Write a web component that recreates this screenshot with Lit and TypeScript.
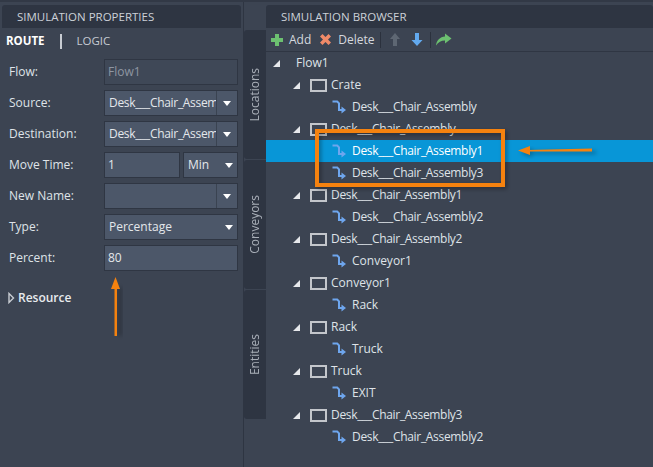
import { LitElement, html, css, svg } from "lit";
import { customElement } from "lit/decorators.js";

type Field = { label: string; kind: "text" | "combo" | "select" | "time"; value: string; muted?: boolean };

const FIELDS: Field[] = [
  { label: "Flow:", kind: "text", value: "Flow1", muted: true },
  { label: "Source:", kind: "combo", value: "Desk___Chair_Assembly1" },
  { label: "Destination:", kind: "combo", value: "Desk___Chair_Assembly3" },
  { label: "Move Time:", kind: "time", value: "1" },
  { label: "New Name:", kind: "combo", value: "" },
  { label: "Type:", kind: "select", value: "Percentage" },
  { label: "Percent:", kind: "text", value: "80" },
];

type Node = { label: string; children: string[]; selected?: string };

const TREE: Node[] = [
  { label: "Crate", children: ["Desk___Chair_Assembly"] },
  {
    label: "Desk___Chair_Assembly",
    children: ["Desk___Chair_Assembly1", "Desk___Chair_Assembly3"],
    selected: "Desk___Chair_Assembly1",
  },
  { label: "Desk___Chair_Assembly1", children: ["Desk___Chair_Assembly2"] },
  { label: "Desk___Chair_Assembly2", children: ["Conveyor1"] },
  { label: "Conveyor1", children: ["Rack"] },
  { label: "Rack", children: ["Truck"] },
  { label: "Truck", children: ["EXIT"] },
  { label: "Desk___Chair_Assembly3", children: ["Desk___Chair_Assembly2"] },
];

const routeIcon = svg`<svg class="route" width="14" height="14" viewBox="0 0 14 14">
  <path d="M0.5 1.5H5.2L7 3.3V10H11" fill="none" stroke="#6ea6ee" stroke-width="2"/>
  <path d="M9.5 6.5L14 10L9.5 13.5Z" fill="#6ea6ee"/>
</svg>`;

// the long asset names run tighter than the short labels in the reference
const nameClass = (s: string) => (s.includes("___") ? "long" : "");

@customElement("app-root")
class AppRoot extends LitElement {
  static override styles = css`
    :host {
      display: block;
      position: relative;
      width: 653px;
      height: 467px;
      overflow: hidden;
      background: #3c4452;
      color: #dfe3e8;
      font-family: "Open Sans", "Noto Sans", sans-serif;
      font-size: 12px;
      line-height: 16px;
    }

    .long {
      letter-spacing: -0.32px;
    }

    .layout {
      display: flex;
      height: 467px;
      box-sizing: border-box;
      border-top: 2px solid #323946;
    }

    .header {
      height: 23px;
      margin-top: 3px;
      background: #2e3542;
      border-radius: 3px 3px 0 0;
      color: #ccd1d8;
      font-size: 11.5px;
      line-height: 23px;
      padding-left: 15px;
      flex: none;
    }

    /* left panel */
    .left {
      width: 243px;
      flex: none;
      box-sizing: border-box;
      padding-left: 2px;
    }

    .left .header {
      width: 224px;
    }

    .route-tabs {
      display: flex;
      align-items: center;
      height: 26px;
      padding-left: 4px;
      font-size: 11.5px;
    }

    .route-tabs b {
      color: #fff;
      font-weight: 700;
    }

    .route-tabs i {
      width: 2px;
      height: 15px;
      margin: 0 15px 0 15px;
      background: #c8ccd2;
    }

    .route-tabs span {
      color: #c6cbd2;
    }

    .form {
      display: flex;
      flex-direction: column;
      gap: 5px;
      margin-top: 5px;
    }

    .row {
      display: flex;
      align-items: center;
      height: 26px;
      padding-left: 7px;
    }

    .row label {
      width: 95px;
      flex: none;
    }

    .control {
      display: flex;
      gap: 3px;
      width: 134px;
      height: 26px;
    }

    .box {
      display: flex;
      align-items: center;
      flex: 1;
      min-width: 0;
      box-sizing: border-box;
      background: #4c5769;
      border: 1px solid #2f3643;
      padding: 0 3px;
      color: #e4e7eb;
      white-space: nowrap;
      overflow: hidden;
    }

    .box.muted {
      background: #3f4857;
      color: #8e96a2;
    }

    .box.combo {
      padding: 0;
    }

    .box.combo .text {
      flex: 1;
      min-width: 0;
      align-self: stretch;
      line-height: 24px;
      padding-left: 4px;
      border-right: 1px solid #3a4351;
      overflow: hidden;
    }

    .box.select {
      justify-content: space-between;
      padding: 0 4px;
    }

    .caret {
      width: 0;
      height: 0;
      border-left: 4px solid transparent;
      border-right: 4px solid transparent;
      border-top: 5px solid #fff;
      flex: none;
    }

    .box.combo .caret {
      margin: 0 6px;
    }

    .resource {
      display: flex;
      align-items: center;
      gap: 3px;
      margin: 19px 0 0 6px;
      color: #e8ebee;
      font-size: 12px;
      font-weight: 600;
    }

    /* vertical tabs */
    .tabs {
      width: 23px;
      flex: none;
      display: flex;
      flex-direction: column;
      gap: 1px;
      padding-top: 28px;
      box-sizing: border-box;
      border-left: 1px solid #2e3542;
    }

    .tab {
      height: 129px;
      background: #2e3542;
      border-radius: 3px 0 0 3px;
      color: #a9afb8;
      display: flex;
      align-items: center;
      justify-content: center;
    }

    .tab span {
      writing-mode: vertical-rl;
      transform: rotate(180deg);
      font-size: 12px;
    }

    /* browser */
    .browser {
      flex: 1;
      min-width: 0;
    }

    .toolbar {
      display: flex;
      align-items: center;
      height: 23px;
      border-bottom: 1px solid #2f3643;
      padding-left: 4px;
      color: #d4d8de;
    }

    .toolbar .tool {
      display: flex;
      align-items: center;
      gap: 5px;
      margin-right: 8px;
    }

    .toolbar .tool.delete {
      gap: 6px;
      margin-right: 5px;
    }

    .toolbar .sep {
      width: 1px;
      height: 16px;
      background: #2b313d;
    }

    .toolbar svg {
      flex: none;
    }

    .toolbar .up {
      margin: 0 2px 0 8px;
    }

    .toolbar .down {
      margin: 0 7px 0 8px;
    }

    .toolbar .go {
      margin-left: 4px;
    }

    .tree {
      display: flex;
      flex-direction: column;
    }

    .node {
      display: flex;
      align-items: center;
      height: 22px;
      white-space: nowrap;
    }

    .node.selected {
      background: #0896d7;
      color: #fff;
    }

    .expander {
      width: 0;
      height: 0;
      border-left: 7px solid transparent;
      border-bottom: 7px solid #e6e8eb;
      flex: none;
    }

    .node.root {
      padding-left: 7px;
    }

    .node.root .label {
      margin-left: 16px;
      color: #dfe3e8;
    }

    .node.parent {
      padding-left: 27px;
    }

    .node.parent .frame {
      width: 17px;
      height: 13px;
      box-sizing: border-box;
      border: 2px solid #c3c6cb;
      margin: 0 4px 0 10px;
      flex: none;
    }

    .node.child {
      padding-left: 66px;
    }

    .node.child .route {
      margin-right: 6px;
      flex: none;
    }

    /* annotations drawn over the screenshot */
    .overlay {
      position: absolute;
      left: 0;
      top: 0;
      pointer-events: none;
    }
  `;

  renderField(f: Field) {
    if (f.kind === "time") {
      return html`<div class="control">
        <div class="box" style="flex: 0 0 76px">${f.value}</div>
        <div class="box select"><span>Min</span><i class="caret"></i></div>
      </div>`;
    }
    if (f.kind === "combo") {
      return html`<div class="control">
        <div class="box combo">
          <span class="text ${nameClass(f.value)}">${f.value}</span><i class="caret"></i>
        </div>
      </div>`;
    }
    if (f.kind === "select") {
      return html`<div class="control">
        <div class="box select"><span>${f.value}</span><i class="caret"></i></div>
      </div>`;
    }
    return html`<div class="control">
      <div class="box ${f.muted ? "muted" : ""}">${f.value}</div>
    </div>`;
  }

  override render() {
    return html`
      <div class="layout">
        <section class="left">
          <div class="header">SIMULATION PROPERTIES</div>
          <div class="route-tabs"><b>ROUTE</b><i></i><span>LOGIC</span></div>
          <div class="form">
            ${FIELDS.map(
              (f) => html`<div class="row">
                <label>${f.label}</label>${this.renderField(f)}
              </div>`
            )}
          </div>
          <div class="resource">
            <svg width="7" height="12" viewBox="0 0 7 12">
              <path d="M1 1.5L5.5 6L1 10.500Z" fill="none" stroke="#c8ccd2" stroke-width="1.400" />
            </svg>
            Resource
          </div>
        </section>

        <nav class="tabs">
          <div class="tab"><span>Locations</span></div>
          <div class="tab"><span>Conveyors</span></div>
          <div class="tab"><span>Entities</span></div>
        </nav>

        <section class="browser">
          <div class="header">SIMULATION BROWSER</div>
          <div class="toolbar">
            <div class="tool">
              <svg width="14" height="14" viewBox="0 0 14 14">
                <path d="M5 1H9V5H13V9H9V13H5V9H1V5H5Z" fill="#6cc070" />
              </svg>
              Add
            </div>
            <div class="tool delete">
              <svg width="13" height="13" viewBox="0 0 13 13">
                <path d="M1 3.500L3.500 1L6.500 4L9.500 1L12 3.500L9 6.500L12 9.500L9.500 12L6.500 9L3.500 12L1 9.500L4 6.500Z" fill="#f08a68" />
              </svg>
              Delete
            </div>
            <i class="sep"></i>
            <svg class="up" width="12" height="15" viewBox="0 0 12 15">
              <path d="M6 1L11 7H8V14H4V7H1Z" fill="#5e6773" />
            </svg>
            <svg class="down" width="12" height="15" viewBox="0 0 12 15">
              <path d="M6 14L11.500 8H8V1H4V8H0.500Z" fill="#62a9ee" />
            </svg>
            <i class="sep"></i>
            <svg class="go" width="17" height="13" viewBox="0 0 17 13">
              <path d="M10 0.500L16.500 5.500L10 10.500V7.500C6 7.500 3.500 9 1 12.500C1.500 7.500 5 3.800 10 3.500Z" fill="#6cc070" />
            </svg>
          </div>
          <div class="tree">
            <div class="node root"><i class="expander"></i><span class="label">Flow1</span></div>
            ${TREE.map(
              (n) => html`
                <div class="node parent">
                  <i class="expander"></i><i class="frame"></i
                  ><span class=${nameClass(n.label)}>${n.label}</span>
                </div>
                ${n.children.map(
                  (c) => html`<div class="node child ${n.selected === c ? "selected" : ""}">
                    ${routeIcon}<span class=${nameClass(c)}>${c}</span>
                  </div>`
                )}
              `
            )}
          </div>
        </section>
      </div>

      <svg class="overlay" width="653" height="467" viewBox="0 0 653 467">
        <defs>
          <filter id="soft" x="-20%" y="-20%" width="140%" height="140%">
            <feGaussianBlur stdDeviation="2" />
          </filter>
        </defs>
        <rect x="319" y="133" width="186" height="54" fill="none" stroke="#000" stroke-opacity="0.35" stroke-width="4" filter="url(#soft)" />
        <rect x="317" y="131" width="186" height="54" fill="none" stroke="#f5820f" stroke-width="4" />
        <path d="M520 153L532 148V157ZM530 151.500L596 151V154L530 154Z" fill="#000" fill-opacity="0.3" filter="url(#soft)" />
        <path d="M527 150L592 148.500V151.500L527 151.500Z" fill="#f5820f" />
        <path d="M518 150.500L530 146V155Z" fill="#f5820f" />
        <path d="M118 336V287H122V336Z" fill="#000" fill-opacity="0.25" filter="url(#soft)" />
        <path d="M114.500 336V287H117V336Z" fill="#f5820f" />
        <path d="M115.500 277L111 289H120Z" fill="#f5820f" />
      </svg>
    `;
  }
}

// Prevent tree-shaking
void AppRoot;
